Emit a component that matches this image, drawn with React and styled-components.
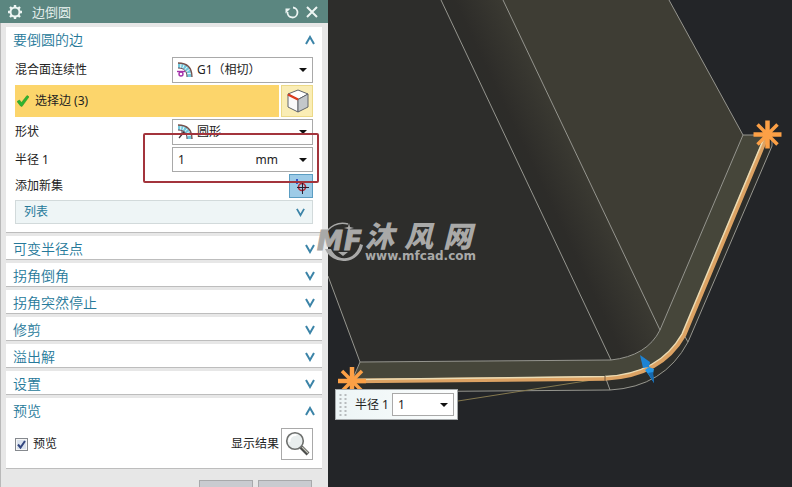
import { useState } from "react";
import styled, { createGlobalStyle, css } from "styled-components";

const GlobalStyle = createGlobalStyle`
  * {
    box-sizing: border-box;
  }
  body {
    margin: 0;
    background: #232528;
    color: #222;
    font-family: "Noto Sans", "Noto Sans CJK SC", sans-serif;
    font-size: 12px;
    line-height: 18px;
  }
  button, input, select {
    margin: 0;
    padding: 0;
    border: none;
    border-radius: 0;
    background: none;
    color: inherit;
    font: inherit;
  }
  svg {
    display: block;
  }
`;
const Page = styled.main`
  display: flex;
  height: 100vh;
  overflow: hidden;
`;
const Panel = styled.aside`
  flex: 0 0 328px;
  display: flex;
  flex-direction: column;
  background: #e7e7e7;
`;
const TitleBar = styled.header`
  display: flex;
  flex-shrink: 0;
  align-items: center;
  gap: 4px;
  height: 23px;
  padding: 0 8px 0 7px;
  background: #5b8680;
  color: #edf5f3;
`;
const PanelTitle = styled.h1`
  flex: 1;
  margin: 0;
  padding-left: 5px;
  font-size: 13px;
  font-weight: 350;
`;
const BarButton = styled.button`
  width: 16px;
  height: 16px;
`;
const Sections = styled.div`
  flex: 1;
  display: flex;
  flex-direction: column;
  gap: 3px;
  padding: 4px 6px 0 5px;
  border-left: 1px solid #b9b9b9;
`;
const Card = styled.section`
  background: #fff;
  border-bottom: 1px solid #bdbdbd;
`;
const CardTitle = styled.h2`
  margin: 0;
  font-size: 14px;
  font-weight: 350;
`;
const CardToggle = styled.button`
  display: flex;
  align-items: center;
  justify-content: space-between;
  width: 100%;
  height: 23px;
  padding: 2px 7px 0;
  color: #26799a;
`;
const CardBody = styled.div`
  display: flex;
  flex-direction: column;
  gap: 2px;
  padding: 7px 9px 8px;
`;
const Row = styled.div`
  position: relative;
  display: grid;
  grid-template-columns: 1fr ${({ $control }) => $control || "141px"};
  align-items: center;
  column-gap: 2px;
`;
const boxCss = css`
  position: relative;
  display: flex;
  align-items: center;
  border: 1px solid #a9a9a9;
  background: #fff;
`;
const SelectBox = styled.div`
  ${boxCss}
  height: 26px;
  > svg {
    position: absolute;
    pointer-events: none;
  }
  > svg:first-child {
    left: 4px;
  }
  > svg:last-child {
    right: 5px;
  }
`;
const Select = styled.select`
  appearance: none;
  width: 100%;
  height: 100%;
  padding-left: 24px;
`;
const InputBox = styled.div`
  ${boxCss}
  height: 25px;
  padding: 0 5px;
`;
const NumberInput = styled.input`
  flex: 1;
  min-width: 0;
  height: 100%;
  &:focus {
    outline: none;
  }
`;
const Unit = styled.span`
  padding-right: 21px;
`;
const SelectedRow = styled.div`
  display: flex;
  align-items: center;
  gap: 6px;
  height: 32px;
  padding-left: 2px;
  background: #fcd56b;
`;
const toneCss = {
  yellow: css`
    border-color: #ecd987;
    background: #faedb5;
  `,
  blue: css`
    border-color: #5b9dc2;
    background: #9dcbe7;
  `,
  plain: css`
    border-color: #a9a9a9;
    background: #fff;
  `,
};
const IconButton = styled.button`
  width: ${({ $size }) => $size}px;
  height: ${({ $size }) => $size}px;
  border: 1px solid;
  ${({ $tone }) => toneCss[$tone]}
`;
const ListToggle = styled.button`
  display: flex;
  align-items: center;
  justify-content: space-between;
  height: 24px;
  padding: 0 7px 0 8px;
  border: 1px solid #d2dadb;
  background: #eef5f6;
  color: #26799a;
`;
const Highlight = styled.div`
  position: absolute;
  inset: -14px -6px -11px 128px;
  border: 2px solid #a3343c;
  border-radius: 2px;
  pointer-events: none;
  z-index: 1;
`;
const PreviewRow = styled.div`
  display: flex;
  align-items: center;
  justify-content: space-between;
`;
const CheckLabel = styled.label`
  position: relative;
  display: flex;
  align-items: center;
  gap: 5px;
  > svg {
    position: absolute;
    left: 0;
    pointer-events: none;
  }
`;
const Checkbox = styled.input`
  appearance: none;
  width: 13px;
  height: 13px;
  border: 1px solid #85898e;
  background: #dbe3ee;
  box-shadow: inset 0 0 0 1px #f6f6f6;
  &:not(:checked) + svg {
    visibility: hidden;
  }
`;
const ResultLabel = styled.div`
  display: flex;
  align-items: center;
  gap: 2px;
`;
const Footer = styled.footer`
  display: flex;
  justify-content: flex-end;
  gap: 5px;
  padding: 8px 10px 0 0;
`;
const FooterButton = styled.button`
  flex-shrink: 0;
  width: 54px;
  height: 26px;
  border: 1px solid #a8a9ab;
  background: #c9cbd0;
`;
const Viewport = styled.section`
  position: relative;
  flex: 1;
  min-width: 0;
`;
const Model = styled.svg`
  width: 100%;
  height: 100%;
`;
const FloatingInput = styled.div`
  position: absolute;
  top: 389px;
  left: 7px;
  display: flex;
  align-items: center;
  padding: 3px;
  border: 1px solid #a7abad;
  background: linear-gradient(to right, #edf5f6, #fbfdfd);
  ${InputBox} {
    width: 62px;
    height: 23px;
    margin-left: 3px;
  }
`;
const FloatingLabel = styled.label`
  padding-left: 8px;
`;
const Watermark = styled.div`
  position: absolute;
  top: 218px;
  left: -12px;
  display: flex;
  color: #a9a9a8;
  pointer-events: none;
`;
const MarkName = styled.div`
  display: flex;
  gap: 10px;
  font-family: "Noto Sans CJK SC", sans-serif;
  font-size: 29px;
  font-style: italic;
  font-weight: 900;
  line-height: 32px;
`;
const MarkUrl = styled.div`
  font-family: "DejaVu Sans", sans-serif;
  font-weight: 700;
  line-height: 12px;
`;

const Chevron = ({ up, size = 10 }) => (
  <svg width={size} height={size} viewBox="0 0 10 10" fill="none" stroke="#3c84a8" strokeWidth="2">
    <path d={up ? "M1 9 5 2l4 7" : "M1 1l4 7 4-7"} />
  </svg>
);
const Caret = () => (
  <svg width="8" height="4" viewBox="0 0 8 4">
    <path d="M0 0h8L4 4z" fill="#111" />
  </svg>
);
const Gear = () => (
  <svg width="16" height="16" viewBox="0 0 16 16" fill="none" stroke="currentColor">
    <circle cx="8" cy="8" r="4.500" strokeWidth="2" />
    <path d="M8 1v2M8 13v2M1 8h2M13 8h2M3 3l1.5 1.5M11.5 11.5 13 13M3 13l1.5-1.5M11.5 4.5 13 3" strokeWidth="2.4" />
  </svg>
);
const Reset = () => (
  <svg width="16" height="16" viewBox="0 0 16 16" fill="none" stroke="currentColor" strokeWidth="1.8">
    <path d="M9 3.500a5 5 0 1 1-5.500 4.500" />
    <path d="M1.500 9.500V4.500h5z" fill="currentColor" stroke="none" />
  </svg>
);
const Close = () => (
  <svg width="16" height="16" viewBox="0 0 16 16" stroke="currentColor" strokeWidth="2">
    <path d="M3 3l10 10M13 3 3 13" />
  </svg>
);
const BlendIcon = ({ g1 }) => (
  <svg width="16" height="16" viewBox="0 0 16 16" fill="none">
    <path d="M1 1C9 1 15 5 15 15h-5C10 9 7 6 1 6z" fill="#72c7dc" />
    <path d="M4 1.5 3.5 6M7.5 2 5.5 6.5M11 4 7.5 8M13 7 9 10M14.5 11l-5 1" stroke="#edfaff" />
    <path d="M1 1c8 0 14 4 14 14" stroke="#77504b" strokeWidth="1.3" />
    <path d="M1 6c6 0 9 3 9 9" stroke="#6d4953" />
    {g1 ? (
      <g stroke="#a332aa" strokeWidth="1.4">
        <path d="M0 9.500h8" />
        <circle cx="4" cy="12" r="2" />
      </g>
    ) : (
      <path d="M2 14 7 8M4 8h3v3" stroke="#3b3239" strokeWidth="1.2" />
    )}
  </svg>
);
const Tick = () => (
  <svg width="12" height="12" viewBox="0 0 12 12">
    <path d="M0 6.5 2.5 5 4.5 7.5 10 .5l2 1.3L5 11.5 3.5 11z" fill="#2fb52f" stroke="#238e25" strokeWidth=".5" />
  </svg>
);
const Cube = () => (
  <svg width="30" height="30" viewBox="0 0 30 30" stroke="#60646a" strokeLinejoin="round">
    <path d="M6 8 16 4l10 4-10 5.500z" fill="#fff" />
    <path d="M6 8l10 5.500V26L6 21z" fill="#fafafa" />
    <path d="M16 13.500 26 8v13l-10 5z" fill="#c3c7ca" />
    <path d="M6 8.500 16 13.500" stroke="#db3d20" strokeWidth="2.400" />
  </svg>
);
const AddSet = () => (
  <svg width="22" height="22" viewBox="0 0 22 22" fill="none">
    <circle cx="12" cy="12" r="3.5" stroke="#b32735" strokeWidth="1.6" />
    <path d="M12.500 7v12M7 12.500h12" stroke="#2c1c2d" />
    <path d="M7 4v5" stroke="#2f54c5" strokeWidth="2" />
  </svg>
);
const Magnifier = () => (
  <svg width="30" height="30" viewBox="0 0 30 30">
    <path d="M19 18l7 7" stroke="#4d4e4c" strokeWidth="4" />
    <path d="M20 18l6 6" stroke="#c5c5bb" strokeWidth="1.3" />
    <circle cx="13" cy="12" r="8.300" fill="#e9eeee" stroke="#6e706e" strokeWidth="1.600" />
    <path d="M7.500 13a6 6 0 0 1 7-7" fill="none" stroke="#fff" strokeWidth="2" />
  </svg>
);
const Grip = () => (
  <svg width="8" height="22" viewBox="0 0 8 22">
    <path d="M1.500 0v22M6.500 0v22" stroke="#b7bcbe" strokeWidth="2" strokeDasharray="2 2" />
  </svg>
);
const Star = ({ x, y }) => (
  <g transform={`translate(${x} ${y})`} stroke="#fca046">
    <path d="M0-14v28M-14 0h28" strokeWidth="4.500" />
    <path d="M-10-10l20 20M10-10l-20 20" strokeWidth="3.500" />
    <circle r="5" fill="#fca046" stroke="none" />
  </g>
);
const MarkLogo = () => (
  <svg width="49" height="48" viewBox="0 0 49 48" fill="currentColor">
    <path d="M32 6A19 19 0 0 0 9 17" fill="none" stroke="currentColor" strokeWidth="1.500" />
    <path d="M9 31a20 20 0 0 0 38-4l-3-1c-4 16-22 20-29 5z" />
    <path d="M33 5l1 4 4 1-4 1-1 4-1-4-4-1 4-1z" />
    <path d="M22 34h10l-5 4z" />
    <g stroke="currentColor" fontFamily="DejaVu Sans" fontSize="26" fontStyle="italic" fontWeight="700">
      <text x="1" y="32">
        M
      </text>
      <text x="28" y="32">
        F
      </text>
    </g>
  </svg>
);

const Section = ({ title, children }) => {
  const [open, setOpen] = useState(Boolean(children));
  return (
    <Card>
      <CardTitle>
        <CardToggle aria-expanded={open} onClick={() => setOpen(!open)}>
          {title}
          <Chevron up={open} />
        </CardToggle>
      </CardTitle>
      {open && children && <CardBody>{children}</CardBody>}
    </Card>
  );
};

const collapsed = ["可变半径点", "拐角倒角", "拐角突然停止", "修剪", "溢出解", "设置"];

const EdgeBlendPanel = () => (
  <Panel>
    <TitleBar>
      <Gear />
      <PanelTitle>边倒圆</PanelTitle>
      <BarButton aria-label="重置">
        <Reset />
      </BarButton>
      <BarButton aria-label="关闭">
        <Close />
      </BarButton>
    </TitleBar>
    <Sections>
      <Section title="要倒圆的边">
        <Row>
          <label htmlFor="continuity">混合面连续性</label>
          <SelectBox>
            <BlendIcon g1 />
            <Select id="continuity">
              <option>G1（相切）</option>
            </Select>
            <Caret />
          </SelectBox>
        </Row>
        <Row $control="32px">
          <SelectedRow>
            <Tick />
            选择边 (3)
          </SelectedRow>
          <IconButton $size={32} $tone="yellow" aria-label="选择边">
            <Cube />
          </IconButton>
        </Row>
        <Row>
          <label htmlFor="shape">形状</label>
          <SelectBox>
            <BlendIcon />
            <Select id="shape">
              <option>圆形</option>
            </Select>
            <Caret />
          </SelectBox>
        </Row>
        <Row>
          <label htmlFor="radius">半径 1</label>
          <InputBox>
            <NumberInput id="radius" defaultValue="1" />
            <Unit>mm</Unit>
            <button aria-label="半径选项">
              <Caret />
            </button>
          </InputBox>
          <Highlight />
        </Row>
        <Row $control="24px">
          <label htmlFor="add-set">添加新集</label>
          <IconButton id="add-set" $size={24} $tone="blue">
            <AddSet />
          </IconButton>
        </Row>
        <ListToggle>
          列表
          <Chevron size={9} />
        </ListToggle>
      </Section>
      {collapsed.map((title) => (
        <Section key={title} title={title} />
      ))}
      <Section title="预览">
        <PreviewRow>
          <CheckLabel>
            <Checkbox type="checkbox" defaultChecked />
            <svg width="13" height="13" viewBox="0 0 13 13">
              <path d="M3 6.500 5.500 9.500 10 3" fill="none" stroke="#32467f" strokeWidth="2" />
            </svg>
            预览
          </CheckLabel>
          <ResultLabel>
            <label htmlFor="show-result">显示结果</label>
            <IconButton id="show-result" $size={32} $tone="plain">
              <Magnifier />
            </IconButton>
          </ResultLabel>
        </PreviewRow>
      </Section>
      <Footer>
        <FooterButton aria-label="确定" />
        <FooterButton aria-label="取消" />
      </Footer>
    </Sections>
  </Panel>
);

const ModelView = () => (
  <Model viewBox="0 0 464 487" preserveAspectRatio="xMinYMin slice">
    <defs>
      <linearGradient id="fillet" gradientUnits="userSpaceOnUse" x1="198" y1="180" x2="253" y2="154">
        <stop offset="0" stopColor="#2c2c29" />
        <stop offset=".2" stopColor="#2d2c29" />
        <stop offset="1" stopColor="#3c3b33" />
      </linearGradient>
    </defs>
    <path d="M0 0h464v487H0z" fill="#232528" />
    {/* outer wall below the picked edge */}
    <path d="M24 381 277 378Q333 376 356 335L438 138l6 8-84 196Q336 389 282 390L32 391z" fill="#2c2d2a" />
    {/* rim */}
    <path d="M32 362 283 360Q319 356 332 330L415 135h24L356 335Q333 376 277 378L24 381z" fill="#46463a" />
    <path d="M0 0h113l170 360-251 2L0 276z" fill="#2d2d2b" />
    <path d="M113 0h62l157 330Q319 356 283 360z" fill="url(#fillet)" />
    <path d="M175 0h166l74 135-83 195z" fill="#3e3d34" />
    <g fill="none" stroke="#96968f">
      <path d="M0 276 32 362 283 360Q319 356 332 330L415 135 341 0" />
      <path d="M113 0 283 360M175 0 332 330M415 135h20M32 362l-6 14" />
      <path d="M100 391.500 282 390Q336 387 360 342L444 146v-8M277 376l5 14M356 335l4 7" />
    </g>
    <path d="M130 401 277 378" stroke="#85794f" />
    <path d="M24 381 277 378.500Q333 376 356 335L438 138" fill="none" stroke="#dca263" strokeWidth="4.500" />
    <path d="M24 379.500 277 376.500Q331 374 354 334L436 138" fill="none" stroke="#ecdcb4" strokeWidth="1.500" />
    <path d="M277 376v5" stroke="#70553a" />
    <Star x={24} y={381} />
    <Star x={439.500} y={134.500} />
    <path d="M312 355l10 7-1 5-6 1z" fill="#1d83d3" />
    <path d="M317 370l4-3 5 2-1 5 1 9-6-9z" fill="#2297ea" />
    <path d="M320 373l5-1 1 11z" fill="#1769ae" />
  </Model>
);

const App = () => (
  <>
    <GlobalStyle />
    <Page>
      <EdgeBlendPanel />
      <Viewport>
        <ModelView />
        <FloatingInput>
          <Grip />
          <FloatingLabel htmlFor="radius-float">半径 1</FloatingLabel>
          <InputBox>
            <NumberInput id="radius-float" defaultValue="1" />
            <button aria-label="半径选项">
              <Caret />
            </button>
          </InputBox>
        </FloatingInput>
        <Watermark>
          <MarkLogo />
          <div>
            <MarkName>
              <span>沐</span>
              <span>风</span>
              <span>网</span>
            </MarkName>
            <MarkUrl>www.mfcad.com</MarkUrl>
          </div>
        </Watermark>
      </Viewport>
    </Page>
  </>
);

export default App;
